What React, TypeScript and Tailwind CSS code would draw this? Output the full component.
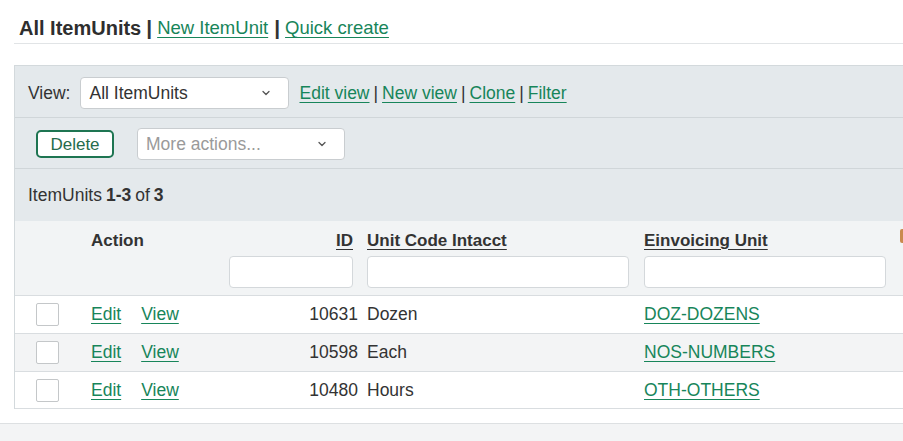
import React from "react";

const GREEN = "text-[#17855a] underline decoration-[#17855a] underline-offset-[3px]";

function Chevron() {
  return (
    <svg width="12" height="12" viewBox="0 0 12 12" fill="none" className="shrink-0">
      <path d="M3 4.5 L6 7.5 L9 4.5" stroke="#555" strokeWidth="1.3" strokeLinecap="round" strokeLinejoin="round" />
    </svg>
  );
}

function Checkbox() {
  return <div className="w-[23px] h-[23px] rounded-[2px] border border-[#c4c7c9] bg-white" />;
}

const rows = [
  { id: "10631", code: "Dozen", unit: "DOZ-DOZENS", bg: "bg-white" },
  { id: "10598", code: "Each", unit: "NOS-NUMBERS", bg: "bg-[#f3f4f5]" },
  { id: "10480", code: "Hours", unit: "OTH-OTHERS", bg: "bg-white" },
];

const cols = "grid grid-cols-[76px_138px_138px_277px_256px_1fr]";

export default function App() {
  return (
    <div
      className="w-[903px] h-[441px] overflow-hidden bg-white text-[#333] text-[17.5px]"
      style={{ fontFamily: '"Liberation Sans", Arial, sans-serif' }}
    >
      {/* Title */}
      <div className="ml-[14px] h-[44px] border-b border-[#e1e4e6] flex items-end pb-[3px] pl-[5px] whitespace-nowrap">
        <span className="text-[20px] leading-[24px] font-bold text-[#2e2e2e]">All ItemUnits</span>
        <span className="text-[21px] leading-[24px] font-bold ml-[5px] mr-[5px] text-[#333]">|</span>
        <a className={`text-[18.5px] leading-[24px] ${GREEN}`}>New ItemUnit</a>
        <span className="text-[21px] leading-[24px] font-bold ml-[6px] mr-[5px] text-[#333]">|</span>
        <a className={`text-[18.5px] leading-[24px] ${GREEN}`}>Quick create</a>
      </div>

      {/* Panel */}
      <div className="ml-[14px] mt-[21px] border-l border-t border-[#d3d9dc] bg-[#e4e9ec]">
        {/* View row */}
        <div className="h-[52px] pt-[3px] border-b border-[#d0d6d9] flex items-center pl-[13px] whitespace-nowrap">
          <span>View:</span>
          <div className="ml-[10px] w-[209px] h-[32px] rounded-[4px] border border-[#c9cdd0] bg-white flex items-center justify-between pl-[8px] pr-[16px]">
            <span>All ItemUnits</span>
            <Chevron />
          </div>
          <a className={`ml-[10px] ${GREEN}`}>Edit view</a>
          <span className="mx-[4px]">|</span>
          <a className={GREEN}>New view</a>
          <span className="mx-[4px]">|</span>
          <a className={GREEN}>Clone</a>
          <span className="mx-[4px]">|</span>
          <a className={GREEN}>Filter</a>
        </div>

        {/* Actions row */}
        <div className="h-[51px] pt-[2px] border-b border-[#d0d6d9] flex items-center pl-[21px]">
          <button className="w-[78px] h-[28px] rounded-[5px] border-2 border-[#1e7552] bg-white text-[#266c4c] text-[17px] leading-none">
            Delete
          </button>
          <div className="ml-[23px] w-[208px] h-[32px] rounded-[4px] border border-[#c9cdd0] bg-white flex items-center justify-between pl-[8px] pr-[16px]">
            <span className="text-[#9a9a9a]">More actions...</span>
            <Chevron />
          </div>
        </div>

        {/* Count row */}
        <div className="h-[52px] flex items-center pl-[13px] whitespace-nowrap">
          <span>ItemUnits </span>
          <span className="font-bold ml-[4px]">1-3</span>
          <span className="ml-[4px]">of</span>
          <span className="font-bold ml-[4px]">3</span>
        </div>

        {/* Table header */}
        <div className={`${cols} bg-[#f2f4f5] h-[74px] whitespace-nowrap text-[17px]`}>
          <div />
          <div className="pt-[10px]">
            <div className="h-[20px] leading-[20px] font-bold">Action</div>
          </div>
          <div className="pt-[10px] w-[124px]">
            <div className="h-[20px] leading-[20px] font-bold text-right">
              <span className="underline underline-offset-[3px]">ID</span>
            </div>
            <div className="mt-[5px] h-[32px] w-[124px] rounded-[4px] border border-[#d4d8db] bg-white" />
          </div>
          <div className="pt-[10px]">
            <div className="h-[20px] leading-[20px] font-bold">
              <span className="underline underline-offset-[3px]">Unit Code Intacct</span>
            </div>
            <div className="mt-[5px] h-[32px] w-[262px] rounded-[4px] border border-[#d4d8db] bg-white" />
          </div>
          <div className="pt-[10px]">
            <div className="h-[20px] leading-[20px] font-bold">
              <span className="underline underline-offset-[3px]">Einvoicing Unit</span>
            </div>
            <div className="mt-[5px] h-[32px] w-[242px] rounded-[4px] border border-[#d4d8db] bg-white" />
          </div>
          <div className="pt-[8px]">
            <div className="w-[6px] h-[14px] rounded-[2px] bg-[#c98a4e]" />
          </div>
        </div>

        {/* Body rows */}
        {rows.map((r, i) => (
          <div
            key={r.id}
            className={`${cols} ${r.bg} ${i === 2 ? "h-[37px]" : "h-[38px]"} border-t border-[#d9dde0] items-center whitespace-nowrap`}
          >
            <div className="pl-[21px] flex items-center">
              <Checkbox />
            </div>
            <div className="flex items-center">
              <a className={GREEN}>Edit</a>
              <a className={`ml-[20px] ${GREEN}`}>View</a>
            </div>
            <div className="text-right pr-[9px]">{r.id}</div>
            <div>{r.code}</div>
            <div>
              <a className={GREEN}>{r.unit}</a>
            </div>
            <div />
          </div>
        ))}
        <div className="border-t border-[#d9dde0]" />
      </div>

      {/* Bottom area */}
      <div className="mt-[14px] border-t border-[#dde0e2] bg-[#f3f4f5] h-[40px]" />
    </div>
  );
}
